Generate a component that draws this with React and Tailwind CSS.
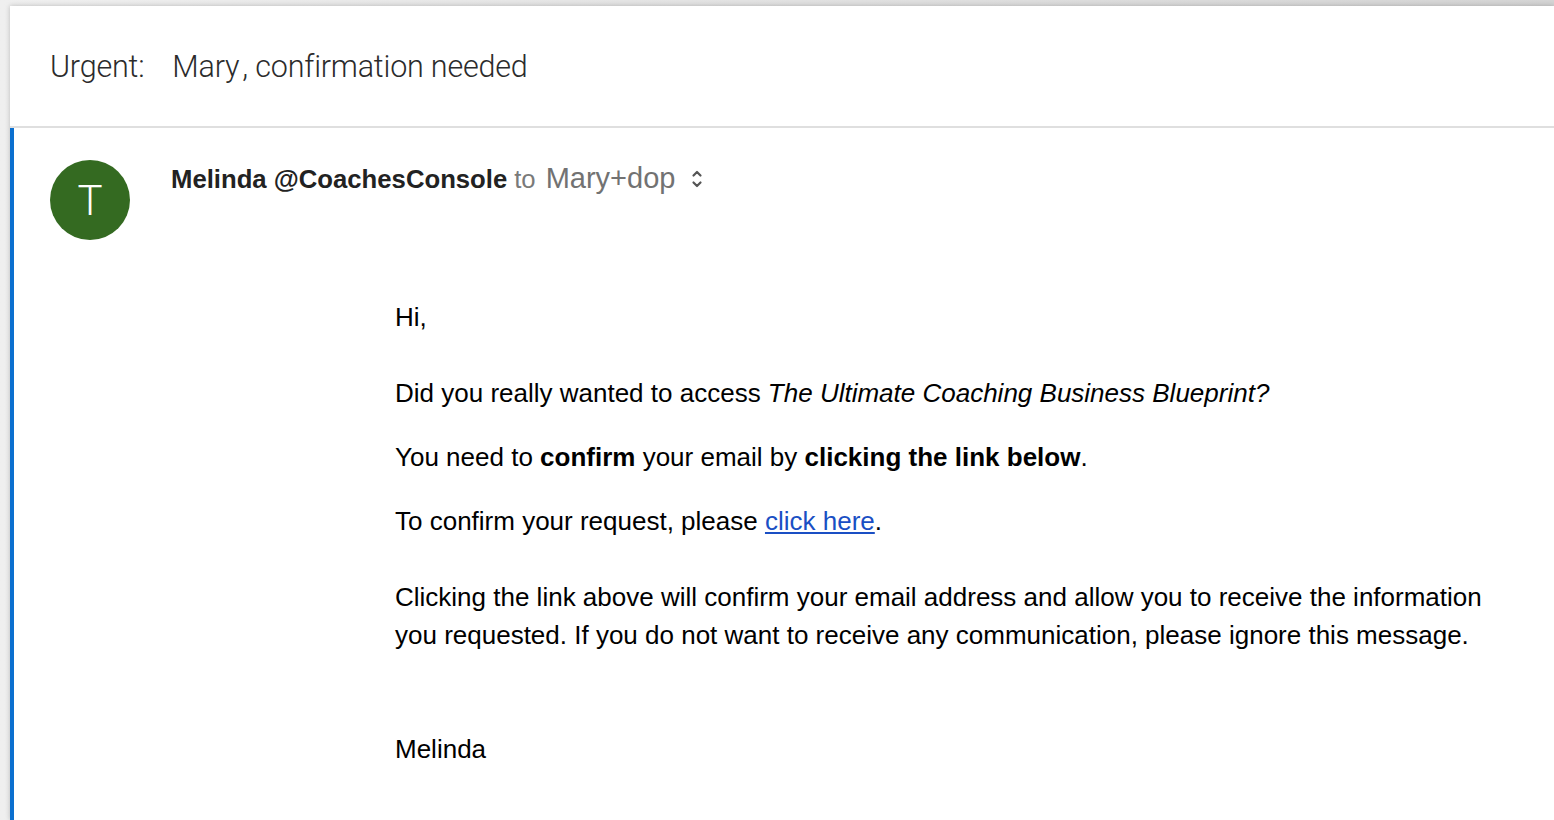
export default function App() {
  return (
    <div className="min-h-screen w-full bg-gradient-to-r from-[#efefef] to-[#d4d4d4] pl-[10px] pt-[6px]">
      <div className="min-h-[814px] bg-white shadow-[0_0_5px_rgba(0,0,0,0.22)]" style={{ fontFamily: '"Liberation Sans", Arial, sans-serif' }}>
        {/* Subject header */}
        <div className="h-[122px] border-b-2 border-[#dfdfdf] flex items-center pl-[40px] pt-[2px]">
          <div className="text-[30.5px] text-[#2b2b2b] font-light tracking-[-0.2px]" style={{ fontFamily: 'Roboto, "Liberation Sans", sans-serif' }}>
            <span>Urgent:</span>
            <span className="ml-[28px]">Mary</span>
            <span className="ml-[3px]">, confirmation needed</span>
          </div>
        </div>
        {/* Message */}
        <div className="border-l-4 border-[#0b6fcf] min-h-[692px] pt-[32px]">
          <div className="flex items-start pl-[36px]">
            <div className="w-[80px] h-[80px] rounded-full bg-[#346a21] flex items-center justify-center text-white text-[42px] font-light" style={{ fontFamily: 'Roboto, "Liberation Sans", sans-serif' }}>
              T
            </div>
            <div className="ml-[41px] flex items-center h-[34px] mt-[2px]">
              <span className="text-[25.7px] font-bold text-[#222]">Melinda @CoachesConsole</span>
              <span className="text-[25.7px] text-[#7a7a7a] ml-[7px]">to</span>
              <span className="text-[29px] text-[#727272] ml-[10px]">Mary+dop</span>
              <svg className="ml-[15px]" width="14" height="22" viewBox="0 0 14 22" fill="none" stroke="#555" strokeWidth="2.2" strokeLinecap="round" strokeLinejoin="round">
                <path d="M3.5 7.5 L7 4 L10.5 7.5" />
                <path d="M3.5 14.5 L7 18 L10.5 14.5" />
              </svg>
            </div>
          </div>
          <div className="pl-[381px] pr-[50px] mt-[58px] text-[26px] leading-[38px] text-black">
            <p>Hi,</p>
            <p className="mt-[38px]">Did you really wanted to access <i>The Ultimate Coaching Business Blueprint?</i></p>
            <p className="mt-[26px]">You need to <b>confirm</b> your email by <b>clicking the link below</b>.</p>
            <p className="mt-[26px]">To confirm your request, please <a className="text-[#1a4fc4] underline">click here</a>.</p>
            <p className="mt-[38px]">Clicking the link above will confirm your email address and allow you to receive the information you requested. If you do not want to receive any communication, please ignore this message.</p>
            <p className="mt-[76px]">Melinda</p>
          </div>
        </div>
      </div>
    </div>
  );
}
